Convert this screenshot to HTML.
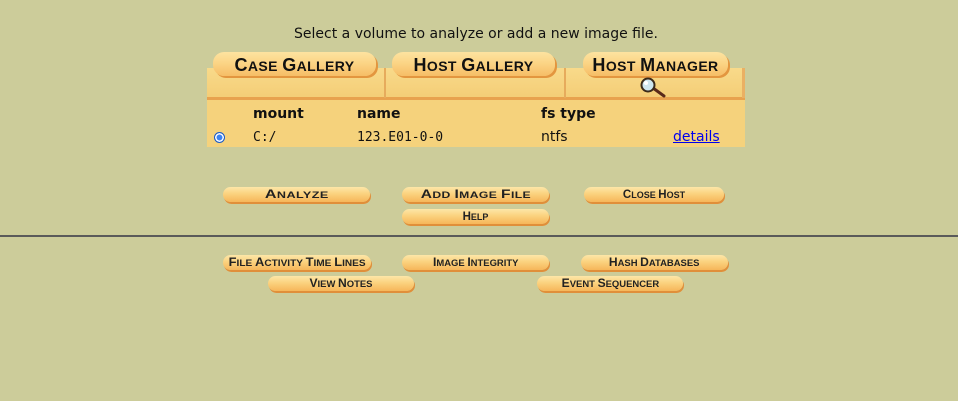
<!DOCTYPE html>
<html><head><style>
html,body{margin:0;padding:0;}
body{width:958px;height:401px;background:#cccc9a;position:relative;overflow:hidden;font-family:"DejaVu Sans","Liberation Sans",sans-serif;}
.a{position:absolute;}
.btn{position:absolute;height:15px;border-radius:8px;background:linear-gradient(#fde6a8 0%,#fbd27f 45%,#f6b65a 100%);box-shadow:1px 2px 0 #e08f3a;font-family:"Liberation Sans",sans-serif;font-weight:bold;color:#222;text-align:center;font-size:9px;line-height:16px;white-space:nowrap;}
.btn span{display:inline-block;}
.btn i{font-style:normal;font-size:11.5px;}
.tab{position:absolute;height:24px;border-radius:11px;background:linear-gradient(#fde3a0 0%,#fbd383 50%,#f6bd66 100%);box-shadow:2px 2px 0 #e3963f;font-family:"Liberation Sans",sans-serif;font-weight:bold;color:#111;text-align:center;font-size:14px;line-height:27px;letter-spacing:0.4px;white-space:nowrap;}
.tab i{font-style:normal;font-size:18px;}
.mono{font-family:"DejaVu Sans Mono","Liberation Mono",monospace;font-size:13px;}
</style></head><body>
<div class="a" style="left:0;top:26px;width:952px;text-align:center;font-size:14px;color:#111;">Select a volume to analyze or add a new image file.</div>

<div class="a" style="left:207px;top:68px;width:538px;height:79px;background:#f5d27c;"></div>
<div class="a" style="left:207px;top:68px;width:538px;height:30px;background:linear-gradient(#f8da8a,#f4cd76);"></div>
<div class="a" style="left:207px;top:97px;width:538px;height:3px;background:#e8a24e;"></div>
<div class="a" style="left:384px;top:68px;width:2px;height:30px;background:#e6ab5c;"></div>
<div class="a" style="left:564px;top:68px;width:2px;height:30px;background:#e6ab5c;"></div>
<div class="a" style="left:742px;top:68px;width:3px;height:30px;background:#eab063;"></div>

<div class="tab" style="left:213px;top:52px;width:163px;"><i>C</i>ASE <i>G</i>ALLERY</div>
<div class="tab" style="left:392px;top:52px;width:163px;"><i>H</i>OST <i>G</i>ALLERY</div>
<div class="tab" style="left:583px;top:52px;width:145px;"><i>H</i>OST <i>M</i>ANAGER</div>
<svg class="a" style="left:637px;top:77px;" width="32" height="22" viewBox="0 0 32 22">
<line x1="16" y1="11" x2="27" y2="19" stroke="#5a2a1a" stroke-width="3" stroke-linecap="round"/>
<circle cx="11" cy="8" r="6.5" fill="#cfe6ee" stroke="#3a2a1a" stroke-width="2"/>
<circle cx="9" cy="6" r="2" fill="#fff"/>
</svg>

<div class="a" style="left:253px;top:106px;font-weight:bold;font-size:14px;color:#111;">mount</div>
<div class="a" style="left:357px;top:106px;font-weight:bold;font-size:14px;color:#111;">name</div>
<div class="a" style="left:541px;top:106px;font-weight:bold;font-size:14px;color:#111;">fs type</div>
<div class="a" style="left:214px;top:132px;width:9px;height:9px;border-radius:50%;background:#3b82f0;border:1px solid #1c5bc4;box-shadow:inset 0 0 0 1.5px #fff;"></div>
<div class="a mono" style="left:253px;top:130px;color:#111;">C:/</div>
<div class="a mono" style="left:357px;top:130px;color:#111;">123.E01-0-0</div>
<div class="a" style="left:541px;top:129px;font-size:14px;color:#111;">ntfs</div>
<div class="a" style="left:673px;top:129px;font-size:14px;color:#0000ee;text-decoration:underline;">details</div>

<div class="btn" style="left:223px;top:187px;width:147px;"><span style="transform:scaleX(1.4);letter-spacing:0.3px"><i>A</i>NALYZE</span></div>
<div class="btn" style="left:402px;top:187px;width:147px;"><span style="transform:scaleX(1.35);letter-spacing:0.3px"><i>A</i>DD <i>I</i>MAGE <i>F</i>ILE</span></div>
<div class="btn" style="left:584px;top:187px;width:140px;"><span><i>C</i>LOSE <i>H</i>OST</span></div>
<div class="btn" style="left:402px;top:209px;width:147px;"><span><i>H</i>ELP</span></div>

<div class="a" style="left:0;top:235px;width:958px;height:2px;background:#5a5a5a;"></div>

<div class="btn" style="left:223px;top:255px;width:148px;"><span style="transform:scaleX(1.12)"><i>F</i>ILE <i>A</i>CTIVITY <i>T</i>IME <i>L</i>INES</span></div>
<div class="btn" style="left:402px;top:255px;width:147px;"><span style="transform:scaleX(1.05)"><i>I</i>MAGE <i>I</i>NTEGRITY</span></div>
<div class="btn" style="left:581px;top:255px;width:147px;"><span style="transform:scaleX(1.05)"><i>H</i>ASH <i>D</i>ATABASES</span></div>
<div class="btn" style="left:268px;top:276px;width:146px;"><span style="transform:scaleX(1.05)"><i>V</i>IEW <i>N</i>OTES</span></div>
<div class="btn" style="left:537px;top:276px;width:146px;"><span style="transform:scaleX(1.05)"><i>E</i>VENT <i>S</i>EQUENCER</span></div>
</body></html>
